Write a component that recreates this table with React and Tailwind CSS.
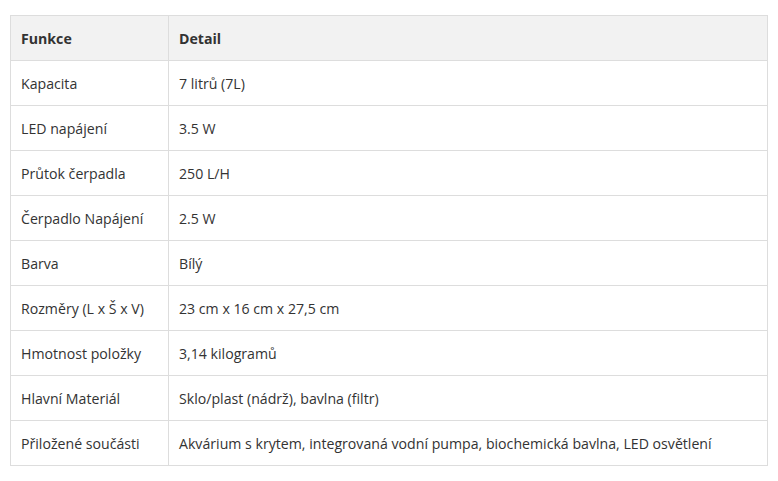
import React from "react";

const rows = [
  ["Kapacita", "7 litrů (7L)"],
  ["LED napájení", "3.5 W"],
  ["Průtok čerpadla", "250 L/H"],
  ["Čerpadlo Napájení", "2.5 W"],
  ["Barva", "Bílý"],
  ["Rozměry (L x Š x V)", "23 cm x 16 cm x 27,5 cm"],
  ["Hmotnost položky", "3,14 kilogramů"],
  ["Hlavní Materiál", "Sklo/plast (nádrž), bavlna (filtr)"],
  ["Přiložené součásti", "Akvárium s krytem, integrovaná vodní pumpa, biochemická bavlna, LED osvětlení"],
];

export default function App() {
  return (
    <div className="bg-white px-[10px] pt-[15px] pb-4" style={{ fontFamily: '"Open Sans", sans-serif' }}>
      <table className="w-[758px] border-collapse text-[14.15px] text-[#333]">
        <thead>
          <tr className="h-[45px] bg-[#f2f2f2]">
            <th className="w-[158px] border border-[#ddd] px-[10px] pt-[2px] text-left font-bold">Funkce</th>
            <th className="border border-[#ddd] px-[10px] pt-[2px] text-left font-bold">Detail</th>
          </tr>
        </thead>
        <tbody>
          {rows.map(([k, v]) => (
            <tr key={k} className="h-[45px]">
              <td className="border border-[#ddd] px-[10px] pt-[2px]">{k}</td>
              <td className="border border-[#ddd] px-[10px] pt-[2px]">{v}</td>
            </tr>
          ))}
        </tbody>
      </table>
    </div>
  );
}
